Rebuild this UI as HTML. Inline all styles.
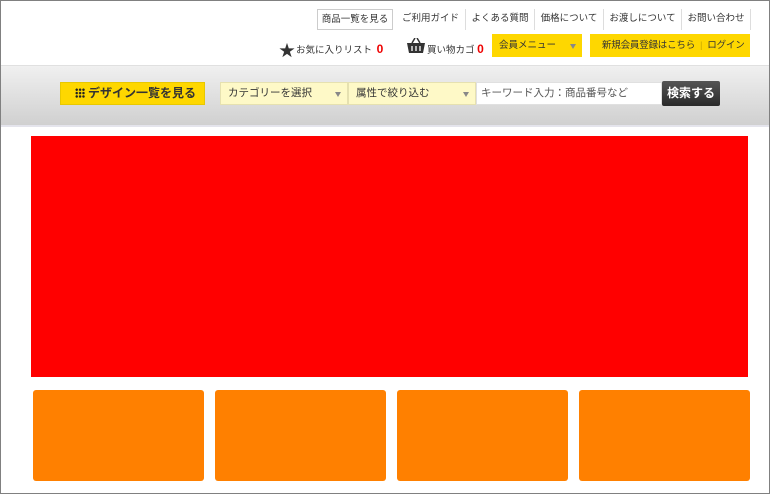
<!DOCTYPE html>
<html><head><meta charset="utf-8"><style>
*{box-sizing:border-box;margin:0;padding:0}
body{width:770px;height:494px;position:relative;overflow:hidden;background:#fff;font-family:"Liberation Sans","Noto Sans CJK JP",sans-serif;font-size:10px;color:#333}
.frame{position:absolute;left:0;top:0;width:770px;height:494px;border:1px solid #808080;z-index:10;pointer-events:none}
.a{position:absolute;white-space:nowrap}
.nav{top:9px;height:21px;line-height:19px;font-size:9.5px;text-align:center}
.sep{top:9px;width:1px;height:21px;background:#ddd}
.y{background:#fed700;height:23px;top:34px;line-height:23px;font-size:9.5px;color:#333;overflow:hidden}
.band{left:1px;top:65px;width:768px;height:62px;background:linear-gradient(#f0f0f0,#d0d0d0);border-top:1px solid #e0e0e0;border-bottom:2px solid #e4e4ec}
.sel{top:82px;height:23px;line-height:21px;background:#fef9c7;font-size:10.5px;padding-left:7px;border:1px solid #e6e1b0}
.tri{position:absolute;right:6px;top:9px;border-left:3.5px solid transparent;border-right:3.5px solid transparent;border-top:5px solid #888}
.o{background:#ff8000;top:390px;width:171px;height:91px;border-radius:3px}
</style></head><body>
<div class="frame"></div>
<div class="a nav" style="left:317px;width:76px;border:1px solid #ccc">商品一覧を見る</div>
<div class="a nav" style="left:396px;width:69px">ご利用ガイド</div>
<div class="a sep" style="left:465px"></div>
<div class="a nav" style="left:466px;width:68px">よくある質問</div>
<div class="a sep" style="left:534px"></div>
<div class="a nav" style="left:535px;width:68px">価格について</div>
<div class="a sep" style="left:603px"></div>
<div class="a nav" style="left:604px;width:77px">お渡しについて</div>
<div class="a sep" style="left:681px"></div>
<div class="a nav" style="left:682px;width:68px">お問い合わせ</div>
<div class="a sep" style="left:750px"></div>
<div class="a" style="left:279px;top:37px;font-size:16px;color:#333">★</div>
<div class="a" style="left:296px;top:42px;font-size:9.5px">お気に入りリスト <b style="color:#e00;font-size:12px;margin-left:2px">0</b></div>
<svg class="a" style="left:406px;top:38px" width="20" height="16" viewBox="0 0 20 16"><path d="M6 5 L9 0 M14 5 L11 0" stroke="#333" stroke-width="1.5" fill="none"/><path d="M1 5h18l-2 10H3z" fill="#333"/><path d="M6 8v5M10 8v5M14 8v5" stroke="#fff" stroke-width="1.3"/></svg>
<div class="a" style="left:427px;top:42px;font-size:9.5px">買い物カゴ <b style="color:#e00;font-size:12px">0</b></div>
<div class="a y" style="left:492px;width:90px;padding-left:7px">会員メニュー<span class="tri" style="top:10px"></span></div>
<div class="a y" style="left:590px;width:160px;padding-left:12px;letter-spacing:-0.2px">新規会員登録はこちら<span style="color:#c9a800;margin:0 5px">|</span>ログイン</div>
<div class="a band"></div>
<div class="a" style="left:60px;top:82px;width:145px;height:23px;background:#fed700;font-size:12px;font-weight:bold;line-height:21px;padding-left:14px;border:1px solid #e8c800"><span style="display:inline-block;width:10px;height:10px;vertical-align:-1px;margin-right:3px;background:radial-gradient(circle,#222 1.2px,transparent 1.3px) 0 0/3.4px 3.4px"></span>デザイン一覧を見る</div>
<div class="a sel" style="left:220px;width:128px">カテゴリーを選択<span class="tri"></span></div>
<div class="a sel" style="left:348px;width:128px">属性で絞り込む<span class="tri"></span></div>
<div class="a" style="left:476px;top:82px;width:186px;height:23px;background:#fff;border:1px solid #e0e0e0;font-size:10.5px;line-height:21px;padding-left:4px;color:#555">キーワード入力：商品番号など</div>
<div class="a" style="left:662px;top:81px;width:58px;height:25px;background:linear-gradient(#555,#2a2a2a);color:#fff;font-size:12px;font-weight:bold;line-height:25px;text-align:center;border-radius:2px">検索する</div>
<div class="a" style="left:31px;top:136px;width:717px;height:241px;background:#f00"></div>
<div class="a o" style="left:33px"></div>
<div class="a o" style="left:215px"></div>
<div class="a o" style="left:397px"></div>
<div class="a o" style="left:579px"></div>
</body></html>
